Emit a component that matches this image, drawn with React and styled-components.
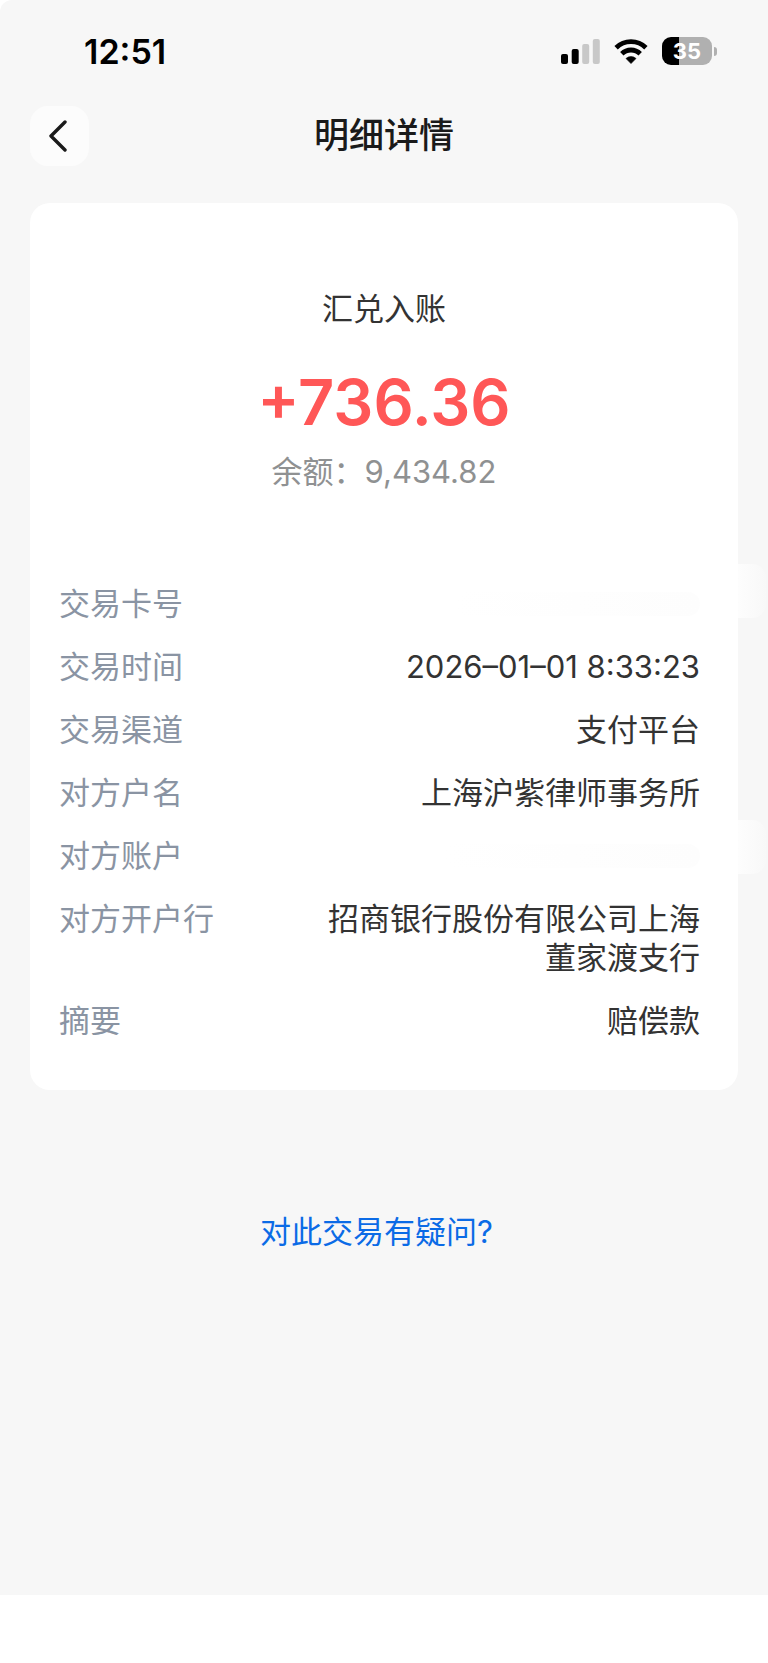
import React from 'react'
import styled, { createGlobalStyle } from 'styled-components'

const GlobalStyle = createGlobalStyle`
  * {
    box-sizing: border-box;
  }
  body {
    margin: 0;
    background: #fff;
    font-family: Inter, 'Noto Sans CJK SC', sans-serif;
    font-size: 31px;
    line-height: 39px;
    color: #333;
  }
`

const Page = styled.div`
  display: flex;
  flex-direction: column;
  min-height: 100vh;
`

const Screen = styled.main`
  flex: 1;
  display: flex;
  flex-direction: column;
  padding: 0 30px;
  border-top-left-radius: 12px;
  background: #f7f7f7;
`

const BottomBar = styled.footer`
  height: 68px;
  background: #fff;
`

const StatusBar = styled.div`
  display: flex;
  align-items: center;
  justify-content: space-between;
  height: 102px;
  padding: 0 21px 0 54px;
`

const Clock = styled.time`
  font-size: 34px;
  font-weight: 600;
  color: #000;
`

const StatusIcons = styled.div`
  display: flex;
  align-items: center;
  gap: 14px;

  svg {
    display: block;
  }
`

const Battery = styled.div`
  display: flex;
  align-items: center;
  gap: 2px;
`

const BatteryBody = styled.div`
  width: 50px;
  height: 28px;
  border-radius: 9px;
  background: linear-gradient(to right, #000 35%, #b0b0b0 35%);
  color: #fff;
  font-size: 22px;
  font-weight: 700;
  line-height: 28px;
  text-align: center;
`

const BatteryTip = styled.div`
  width: 3px;
  height: 9px;
  border-radius: 0 4px 4px 0;
  background: #b0b0b0;
`

const NavBar = styled.header`
  display: grid;
  grid-template-columns: 60px 1fr 60px;
  align-items: center;
  height: 68px;
  margin-bottom: 33px;
`

const BackButton = styled.button`
  display: flex;
  align-items: center;
  justify-content: center;
  width: 59px;
  height: 60px;
  padding: 0 4px 0 0;
  border: 0;
  border-radius: 18px;
  background: #fcfcfc;
  cursor: pointer;
`

const Title = styled.h1`
  margin: 0;
  padding-bottom: 2px;
  font-size: 35px;
  font-weight: 500;
  text-align: center;
  color: #1a1a1a;
`

const Card = styled.section`
  padding: 86px 38px 50px 29px;
  border-radius: 20px;
  background: #fff;
`

const Summary = styled.div`
  display: flex;
  flex-direction: column;
  align-items: center;
  margin: 0 0 93px 9px;
`

const Amount = styled.strong`
  margin: 38px 0 14px;
  font-size: 63px;
  font-weight: 600;
  line-height: 72px;
  color: #ff5757;
`

const Balance = styled.span`
  color: #8f9192;
`

const Details = styled.dl`
  display: flex;
  flex-direction: column;
  gap: 24px;
  margin: 0;
`

const Row = styled.div`
  position: relative;
  display: flex;
  justify-content: space-between;
`

const Label = styled.dt`
  color: #8a94a3;
`

const Value = styled.dd`
  max-width: 380px;
  margin: 0;
  text-align: right;
`

// hidden number: only a faint trace is left
const Masked = styled.span`
  display: block;
  width: ${p => p.$width}px;
  height: 24px;
  margin-top: 8px;
  border-radius: 12px;
  background: linear-gradient(to right, #fff, #fdfdfd);
`

// the eraser stroke runs past the card's right edge
const Smear = styled.span`
  position: absolute;
  top: ${p => p.$top}px;
  right: -66px;
  width: 28px;
  height: 54px;
  border-radius: 0 14px 14px 0;
  background: linear-gradient(to right, #fdfdfd, #f8f8f8);
`

const HelpLink = styled.a`
  align-self: center;
  margin: 122px 15px 0 0;
  color: #0b6be6;
  text-decoration: none;
`

const details = [
  { label: '交易卡号', masked: 246, smear: -20 },
  { label: '交易时间', value: '2026–01–01 8:33:23' },
  { label: '交易渠道', value: '支付平台' },
  { label: '对方户名', value: '上海沪紫律师事务所' },
  { label: '对方账户', masked: 256, smear: -16 },
  { label: '对方开户行', value: '招商银行股份有限公司上海董家渡支行' },
  { label: '摘要', value: '赔偿款' },
]

function SignalIcon() {
  return (
    <svg width="39" height="25" viewBox="0 0 39 25" aria-hidden="true">
      <rect x="0" y="15" width="7" height="10" rx="2" fill="#000" />
      <rect x="10.7" y="10" width="7" height="15" rx="2" fill="#000" />
      <rect x="21.2" y="5" width="7" height="20" rx="2" fill="#c8c8c8" />
      <rect x="31.8" y="0" width="7" height="25" rx="2" fill="#c8c8c8" />
    </svg>
  )
}

function WifiIcon() {
  return (
    <svg width="34" height="25" viewBox="0 0 34 25" aria-hidden="true">
      <g fill="none" stroke="#000" strokeWidth="4.8">
        <path d="M2.1 8.7a21.2 21.2 0 0 1 29.8 0" />
        <path d="M7.8 14.8a13 13 0 0 1 18.4 0" />
      </g>
      <path
        d="M17 24.6l-5-5.1a7.3 7.3 0 0 1 10 0z"
        fill="#000"
        stroke="#000"
        strokeWidth=".6"
        strokeLinejoin="round"
      />
    </svg>
  )
}

function BackIcon() {
  return (
    <svg width="18" height="32" viewBox="0 0 18 32" aria-hidden="true">
      <path
        d="M16 2L2 16l14 14"
        fill="none"
        stroke="#1a1a1a"
        strokeWidth="3.4"
        strokeLinecap="round"
        strokeLinejoin="round"
      />
    </svg>
  )
}

export default function App() {
  return (
    <Page>
      <GlobalStyle />
      <Screen>
        <StatusBar>
          <Clock>12:51</Clock>
          <StatusIcons>
            <SignalIcon />
            <WifiIcon />
            <Battery>
              <BatteryBody>35</BatteryBody>
              <BatteryTip />
            </Battery>
          </StatusIcons>
        </StatusBar>
        <NavBar>
          <BackButton type="button" aria-label="返回">
            <BackIcon />
          </BackButton>
          <Title>明细详情</Title>
        </NavBar>
        <Card>
          <Summary>
            <span>汇兑入账</span>
            <Amount>+736.36</Amount>
            <Balance>余额：9,434.82</Balance>
          </Summary>
          <Details>
            {details.map(({ label, value, masked, smear }) => (
              <Row key={label}>
                <Label>{label}</Label>
                <Value>{masked ? <Masked $width={masked} /> : value}</Value>
                {masked && <Smear $top={smear} />}
              </Row>
            ))}
          </Details>
        </Card>
        <HelpLink href="#help">对此交易有疑问?</HelpLink>
      </Screen>
      <BottomBar />
    </Page>
  )
}
